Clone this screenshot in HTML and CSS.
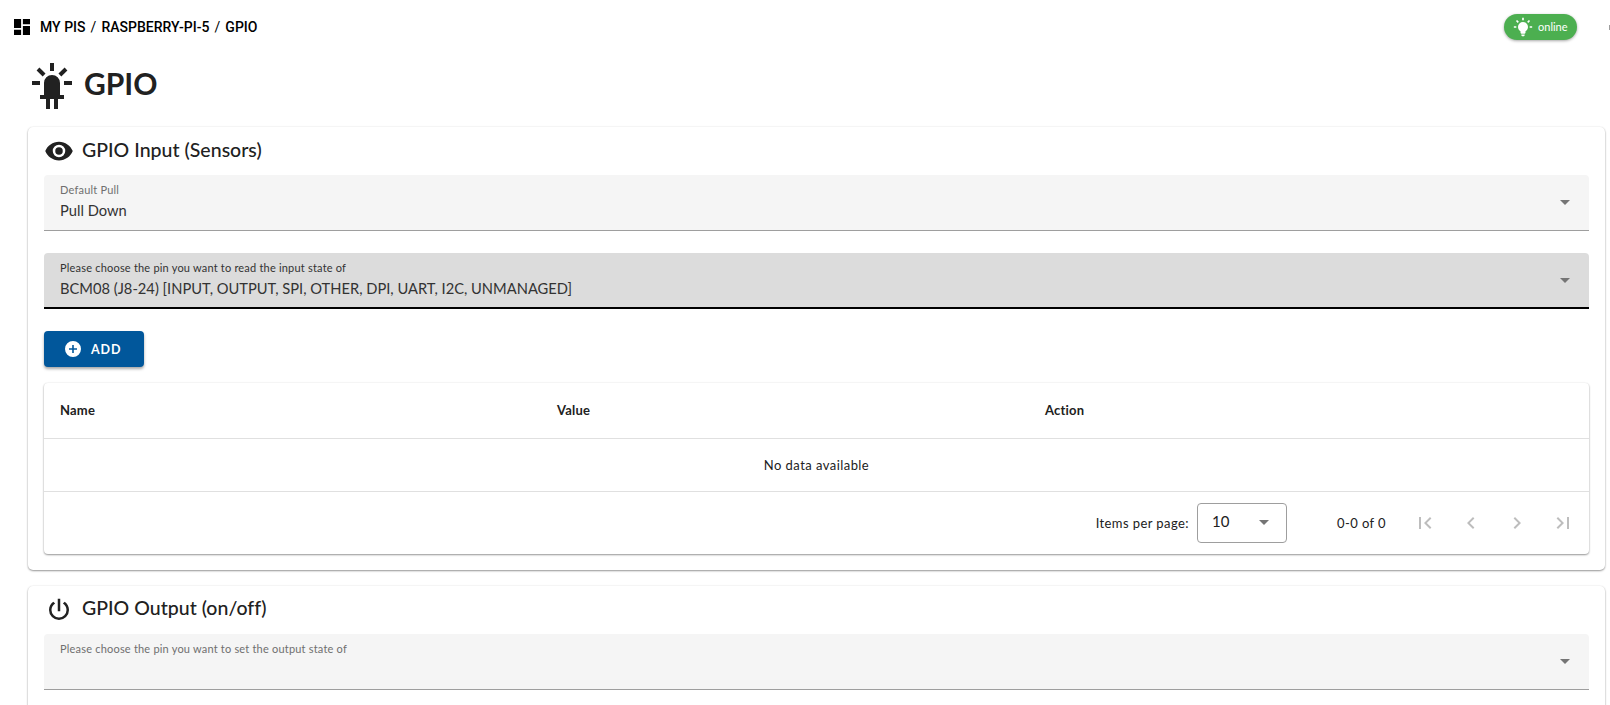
FILE: index.html
```html
<!DOCTYPE html>
<html lang="en">
<head>
<meta charset="utf-8">
<title>GPIO</title>
<link rel="stylesheet" href="styles.css">
</head>
<body>
<header class="appbar">
  <svg class="dash-icon" viewBox="3 3 18 18" aria-hidden="true"><path d="M13,3V9H21V3M13,21H21V11H13M3,21H11V15H3M3,13H11V3H3V13Z"/></svg>
  <nav class="crumbs"><span>MY PIS</span><span class="sep">/</span><span>RASPBERRY-PI-5</span><span class="sep">/</span><span>GPIO</span></nav>
  <div class="spacer"></div>
  <div class="chip">
    <svg class="chip-icon" viewBox="0 0 24 24" aria-hidden="true"><path d="M12,6A6,6 0 0,1 18,12C18,14.22 16.79,16.16 15,17.2V19A1,1 0 0,1 14,20H10A1,1 0 0,1 9,19V17.2C7.21,16.16 6,14.22 6,12A6,6 0 0,1 12,6M14,21V22A1,1 0 0,1 13,23H11A1,1 0 0,1 10,22V21H14M20,11H23V13H20V11M1,11H4V13H1V11M13,1V4H11V1H13M4.92,3.5L7.05,5.64L5.63,7.05L3.5,4.93L4.92,3.5M16.95,5.63L19.07,3.5L20.5,4.93L18.36,7.05L16.95,5.63Z"/></svg>
    <span class="chip-text">online</span>
  </div>
  <div class="account"></div>
</header>

<main class="page">
  <h1 class="title">
    <svg class="led-icon" viewBox="0 0 24 24" aria-hidden="true"><path d="M11,0V4H13V0H11M18.3,2.29L15.24,5.29L16.65,6.71L19.7,3.71L18.3,2.29M5.7,2.29L4.3,3.71L7.35,6.71L8.76,5.29L5.7,2.29M12,6A4,4 0 0,0 8,10V16H6V18H9V23H11V18H13V23H15V18H18V16H16V10A4,4 0 0,0 12,6M2,9V11H6V9H2M18,9V11H22V9H18Z"/></svg>
    <span>GPIO</span>
  </h1>

  <section class="card">
    <h2 class="card-title">
      <svg class="title-icon" viewBox="0 0 24 24" aria-hidden="true"><path d="M12,9A3,3 0 0,0 9,12A3,3 0 0,0 12,15A3,3 0 0,0 15,12A3,3 0 0,0 12,9M12,17A5,5 0 0,1 7,12A5,5 0 0,1 12,7A5,5 0 0,1 17,12A5,5 0 0,1 12,17M12,4.5C7,4.5 2.73,7.61 1,12C2.73,16.39 7,19.5 12,19.5C17,19.5 21.27,16.39 23,12C21.27,7.61 17,4.5 12,4.5Z"/></svg>
      <span class="card-title-text">GPIO Input (Sensors)</span>
    </h2>

    <div class="field">
      <div class="field-text">
        <div class="field-label">Default Pull</div>
        <div class="field-value">Pull Down</div>
      </div>
      <span class="caret"></span>
    </div>

    <div class="field field-focus">
      <div class="field-text">
        <div class="field-label">Please choose the pin you want to read the input state of</div>
        <div class="field-value">BCM08 (J8-24) [INPUT, OUTPUT, SPI, OTHER, DPI, UART, I2C, UNMANAGED]</div>
      </div>
      <span class="caret"></span>
    </div>

    <button class="btn" type="button">
      <svg class="btn-icon" viewBox="0 0 24 24" aria-hidden="true"><path fill-rule="evenodd" d="M12 0a12 12 0 1 0 0 24 12 12 0 0 0 0-24zM10.800 6h2.400v4.800H18v2.400h-4.800V18h-2.400v-4.800H6v-2.400h4.800z"/></svg>
      <span>ADD</span>
    </button>

    <div class="table-wrap">
      <table class="table">
        <thead>
          <tr><th class="col-name">Name</th><th class="col-value">Value</th><th>Action</th></tr>
        </thead>
        <tbody>
          <tr><td colspan="3" class="empty">No data available</td></tr>
        </tbody>
      </table>
      <div class="footer">
        <span class="per-label">Items per page:</span>
        <div class="per-select"><span>10</span><span class="caret"></span></div>
        <span class="range">0-0 of 0</span>
        <div class="pager">
          <svg viewBox="0 0 24 24" aria-hidden="true"><path d="M6 6h2v12H6zM18.400 7.400L17 6l-6 6 6 6 1.400-1.400L13.800 12z"/></svg>
          <svg viewBox="0 0 24 24" aria-hidden="true"><path d="M15.400 7.400L14 6l-6 6 6 6 1.400-1.400L10.800 12z"/></svg>
          <svg viewBox="0 0 24 24" aria-hidden="true"><path d="M8.600 16.600L10 18l6-6-6-6-1.400 1.400L13.200 12z"/></svg>
          <svg viewBox="0 0 24 24" aria-hidden="true"><path d="M16 6h2v12h-2zM5.600 7.400L7 6l6 6-6 6-1.400-1.400L10.200 12z"/></svg>
        </div>
      </div>
    </div>
  </section>

  <section class="card">
    <h2 class="card-title">
      <svg class="title-icon" viewBox="0 0 24 24" aria-hidden="true"><path d="M16.56,5.44L15.11,6.89C16.84,7.94 18,9.83 18,12A6,6 0 0,1 12,18A6,6 0 0,1 6,12C6,9.83 7.16,7.94 8.88,6.88L7.44,5.44C5.36,6.88 4,9.28 4,12A8,8 0 0,0 12,20A8,8 0 0,0 20,12C20,9.28 18.64,6.88 16.56,5.44M13,3H11V13H13"/></svg>
      <span class="card-title-text">GPIO Output (on/off)</span>
    </h2>
    <div class="field">
      <div class="field-text">
        <div class="field-label">Please choose the pin you want to set the output state of</div>
        <div class="field-value">&nbsp;</div>
      </div>
      <span class="caret"></span>
    </div>
  </section>
</main>
</body>
</html>
```

FILE: styles.css
```css
* { box-sizing: border-box; }
html, body { height: 100%; }
body {
  margin: 0;
  overflow: hidden;
  background: #fff;
  color: #212121;
  font-family: "Lato", "Noto Sans", sans-serif;
}
.appbar {
  display: flex;
  align-items: center;
  height: 54px;
  padding-left: 14px;
  width: 1617px;
}
.dash-icon { width: 16px; height: 16px; fill: #000; margin-right: 10px; }
.crumbs {
  display: flex;
  font: 500 14px/20px "Roboto", sans-serif;
  color: #000;
  letter-spacing: .02px;
}
.sep { margin: 0 5px; font-weight: 400; }
.spacer { flex: 1; }
.chip {
  display: flex;
  align-items: center;
  width: 73px;
  height: 26px;
  padding-left: 9px;
  border-radius: 13px;
  background: #4caf50;
  color: #fff;
  font-size: 11px;
  box-shadow: 0 1px 3px rgba(0,0,0,.35);
}
.chip-icon { width: 20px; height: 20px; fill: #fff; margin-right: 5px; }
.chip-text { margin-bottom: 2px; }
.account {
  width: 8px;
  height: 5px;
  margin-left: 32px;
  background: #9e9e9e;
}
.page { padding: 0 5px 0 28px; }
.title {
  display: flex;
  align-items: center;
  height: 58px;
  margin: 0 0 15px;
  font-size: 30px;
  font-weight: 700;
  color: #212121;
}
.led-icon { width: 48px; height: 48px; fill: #212121; margin: 8px 8px 0 0; }
.card {
  background: #fff;
  border-radius: 5px;
  padding: 0 16px 16px;
  margin-bottom: 16px;
  box-shadow: 0 1px 2px rgba(0,0,0,.4), 0 0 2px rgba(0,0,0,.08);
}
.card-title {
  display: flex;
  align-items: center;
  height: 48px;
  margin: 0;
  font-size: 19.500px;
  font-weight: 500;
  letter-spacing: .02px;
  color: #212121;
}
.card-title-text { margin: 0 0 4px 1px; }
.title-icon { width: 30px; height: 30px; fill: #212121; margin-right: 7px; }
.field {
  display: flex;
  align-items: center;
  height: 56px;
  margin-bottom: 22px;
  padding: 0 16px;
  background: #f5f5f5;
  border-radius: 4px 4px 0 0;
  border-bottom: 1px solid #9e9e9e;
}
.field-text { flex: 1; }
.field-label {
  margin-bottom: 1px;
  font-size: 11px;
  line-height: 14px;
  letter-spacing: .2px;
  color: #6f6f6f;
}
.field-value { font-size: 14.700px; line-height: 24px; color: #333; }
.field-focus { background: #dcdcdc; border-bottom: 2px solid #000; }
.field-focus .field-label { color: #333; }
.caret {
  display: inline-block;
  width: 0;
  height: 0;
  border-left: 5px solid transparent;
  border-right: 5px solid transparent;
  border-top: 5px solid #757575;
}
.field .caret { margin-right: 3px; }
.btn {
  display: flex;
  align-items: center;
  width: 100px;
  height: 36px;
  padding: 0 0 0 21px;
  border: 0;
  border-radius: 4px;
  background: #01579b;
  color: #fff;
  font: 700 12.500px "Lato", sans-serif;
  letter-spacing: .9px;
  box-shadow: 0 2px 3px rgba(0,0,0,.35);
}
.btn-icon { width: 16px; height: 16px; fill: #fff; margin-right: 10px; }
.table-wrap {
  margin-top: 16px;
  border-radius: 4px;
  background: #fff;
  box-shadow: 0 1px 2px rgba(0,0,0,.4), 0 0 2px rgba(0,0,0,.08);
}
.table { width: 100%; border-collapse: collapse; table-layout: fixed; }
.col-name { width: 497px; }
.col-value { width: 488px; }
.table th {
  height: 55px;
  padding: 0 16px;
  text-align: left;
  font-size: 13px;
  font-weight: 700;
  letter-spacing: .2px;
  color: #212121;
  border-bottom: 1px solid #e0e0e0;
}
.empty {
  height: 53px;
  text-align: center;
  font-size: 13px;
  letter-spacing: .45px;
  color: #212121;
  border-bottom: 1px solid #e0e0e0;
}
.footer {
  display: flex;
  align-items: center;
  justify-content: flex-end;
  height: 62px;
  padding-right: 14px;
  font-size: 13px;
  letter-spacing: .42px;
}
.per-select {
  display: flex;
  align-items: center;
  justify-content: space-between;
  width: 90px;
  height: 40px;
  margin-left: 8px;
  padding: 0 17px 0 14px;
  border: 1px solid #9e9e9e;
  border-radius: 4px;
  font-size: 15px;
  letter-spacing: 0;
}
.per-select span:first-child { margin-bottom: 3px; }
.range { margin: 0 27px 0 50px; }
.pager { display: flex; gap: 22px; }
.pager svg { width: 24px; height: 24px; fill: #bdbdbd; }
```
